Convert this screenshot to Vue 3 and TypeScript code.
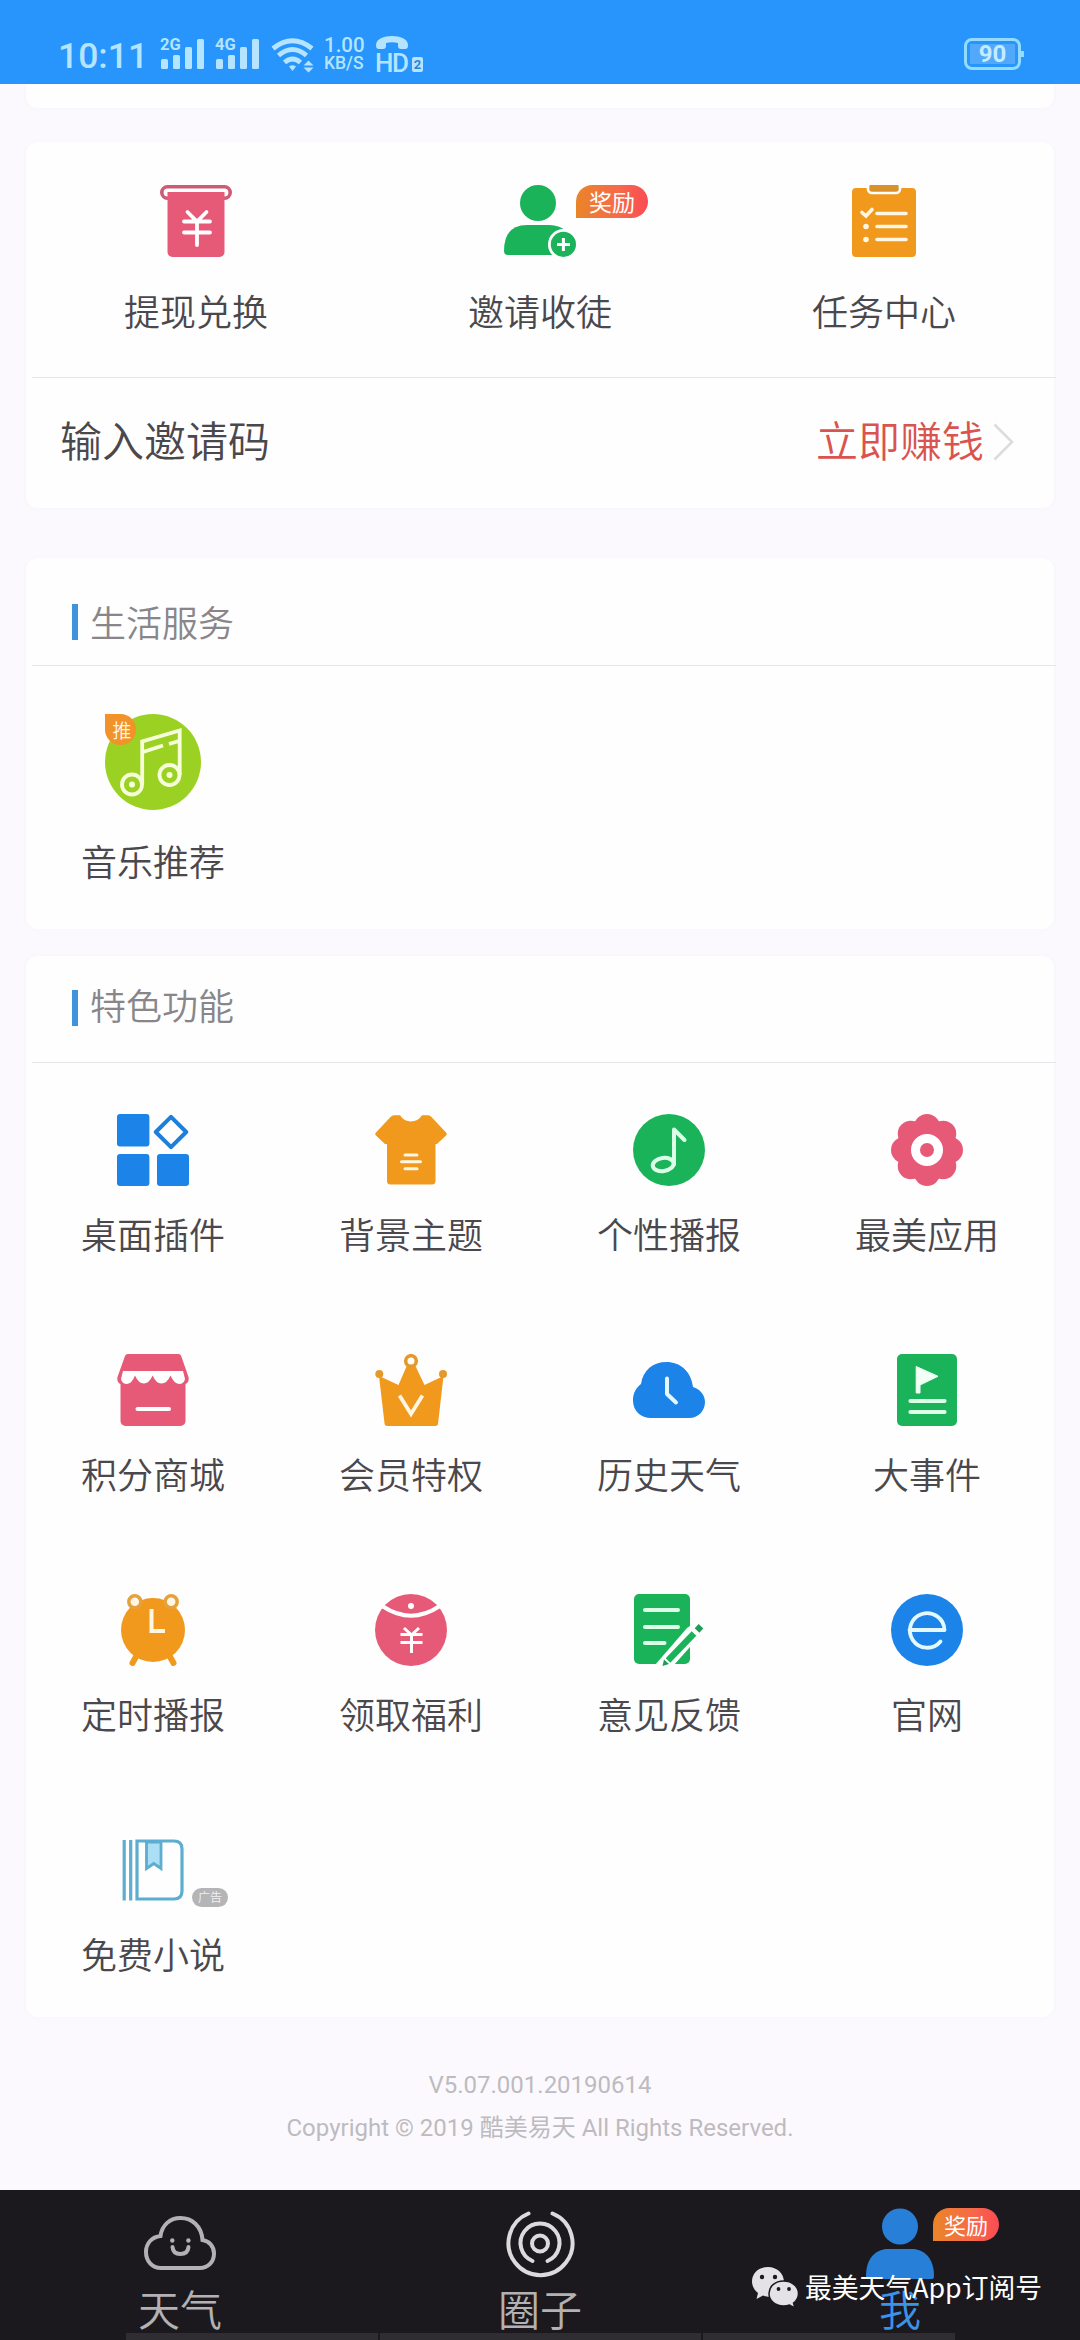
<script setup lang="ts">
interface Feature {
  id: string
  label: string
  tag?: string
}

const rewards: Feature[] = [
  { id: 'withdraw', label: '提现兑换' },
  { id: 'invite', label: '邀请收徒', tag: '奖励' },
  { id: 'task', label: '任务中心' },
]

const features: Feature[] = [
  { id: 'widget', label: '桌面插件' },
  { id: 'theme', label: '背景主题' },
  { id: 'voice', label: '个性播报' },
  { id: 'apps', label: '最美应用' },
  { id: 'shop', label: '积分商城' },
  { id: 'vip', label: '会员特权' },
  { id: 'history', label: '历史天气' },
  { id: 'events', label: '大事件' },
  { id: 'alarm', label: '定时播报' },
  { id: 'bonus', label: '领取福利' },
  { id: 'feedback', label: '意见反馈' },
  { id: 'site', label: '官网' },
  { id: 'novel', label: '免费小说', tag: '广告' },
]

const signals: string[] = ['2G', '4G']
const petals: number[] = [0, 45, 90, 135, 180, 225, 270, 315]
</script>

<template>
  <div class="screen">
    <header class="status">
      <span class="clock">10:11</span>
      <span v-for="s in signals" :key="s" class="signal">
        <svg width="44" height="32" viewBox="0 0 44 32" fill="#b4e4ff">
          <rect x="1" y="21" width="7" height="10" rx="1.5" />
          <rect x="13" y="17" width="7" height="14" rx="1.5" />
          <rect x="25" y="9" width="7" height="22" rx="1.5" />
          <rect x="37" y="1" width="7" height="30" rx="1.5" />
        </svg>
        <em>{{ s }}</em>
      </span>
      <svg class="wifi" width="44" height="36" viewBox="0 0 44 36" fill="none" stroke="#b4e4ff" stroke-width="4.8">
        <path d="M2 11.5Q21.5-4 41 11.5" />
        <path d="M7.500 18.500Q21.500 6.500 35.500 18.500" />
        <path d="M13.500 25.500Q21.500 18.500 29.500 25.500" />
        <path d="M18 29.500Q21.500 27 25 29.500L21.500 34Z" fill="#b4e4ff" stroke="none" />
        <path d="M37.500 23.500L42.500 28.500H32.500ZM37.500 35.500L42.500 30.500H32.500Z" fill="#b4e4ff" stroke="none" />
      </svg>
      <span class="speed"><b>1.00</b><b>KB/S</b></span>
      <span class="volte">
        <svg width="34" height="14" viewBox="0 0 34 14" fill="#b4e4ff">
          <path d="M1 9C1 3 9 0 17 0s16 3 16 9c0 3-1 4-3 4h-4c-2 0-3-1-3-3V7c-4-1-8-1-12 0v3c0 2-1 3-3 3H4c-2 0-3-1-3-4Z" />
        </svg>
        <span class="hd">HD</span>
        <i>2</i>
      </span>
      <span class="battery"><b>90</b></span>
    </header>

    <main class="page">
      <div class="card stub"></div>

      <section class="card first">
        <div class="grid three">
          <div v-for="item in rewards" :key="item.id" class="cell">
            <div class="icon">
              <svg v-if="item.id === 'withdraw'" width="72" height="72" viewBox="0 0 72 72">
                <rect x="1.800" y="1.800" width="68.400" height="11.400" rx="5.700" fill="#fff" stroke="#cf5a74" stroke-width="3.600" />
                <path d="M7.500 7h57v60a5 5 0 0 1-5 5h-47a5 5 0 0 1-5-5Z" fill="#e75a77" />
                <path d="M27.500 27l9.500 9.500 9.500-9.500M24 36.500h26M24 47.500h26M37 36.500V60" fill="none" stroke="#fff" stroke-width="3.800" stroke-linecap="round" />
              </svg>
              <svg v-else-if="item.id === 'invite'" width="72" height="72" viewBox="0 0 72 72">
                <circle cx="34" cy="18" r="18" fill="#1bb35a" />
                <path d="M4 70Q0 70 0 66Q0 40 23 40H45Q68 40 68 66Q68 70 64 70Z" fill="#1bb35a" />
                <circle cx="59.400" cy="59.400" r="14" fill="#1bb35a" stroke="#fff" stroke-width="2.800" />
                <path d="M53 59.400H66M59.400 53V66" stroke="#fff" stroke-width="3" />
              </svg>
              <svg v-else width="72" height="72" viewBox="0 0 72 72">
                <rect x="4" y="3" width="64" height="69" rx="4" fill="#f0991c" />
                <rect x="20" y="-2" width="32" height="10" rx="4" fill="#d9922b" stroke="#fff" stroke-width="2.600" />
                <path d="M14 27.500l4 3.500 6-6.500M29 28.500H58M29 41.500H58M29 54.500H58" fill="none" stroke="#fff7e4" stroke-width="3.600" stroke-linecap="round" />
                <circle cx="18" cy="41.500" r="2.800" fill="#fff7e4" />
                <circle cx="18" cy="54.500" r="2.800" fill="#fff7e4" />
              </svg>
              <span v-if="item.tag" class="reward">{{ item.tag }}</span>
            </div>
            <span class="label">{{ item.label }}</span>
          </div>
        </div>
        <hr />
        <div class="invite-row">
          <span>输入邀请码</span>
          <span class="earn">立即赚钱</span>
          <svg width="22" height="38" viewBox="0 0 22 38" fill="none" stroke="#dcdcde" stroke-width="2.600">
            <path d="M1.500 1.500L19 19 1.500 36.500" />
          </svg>
        </div>
      </section>

      <section class="card second">
        <h2><span>生活服务</span></h2>
        <hr />
        <div class="grid four">
          <div class="cell">
            <div class="music">
              <svg width="96" height="96" viewBox="0 0 96 96" fill="none" stroke="#f6ffd9" stroke-width="3.800">
                <circle cx="48" cy="48" r="48" fill="#9bd123" stroke="none" />
                <circle cx="27" cy="70.500" r="10" />
                <circle cx="64.500" cy="61" r="10" />
                <circle cx="27" cy="70.500" r="3" fill="#f6ffd9" stroke="none" />
                <circle cx="64.500" cy="61" r="3" fill="#f6ffd9" stroke="none" />
                <path d="M37.200 71V27.500L74.700 16.500V61M38 38L58 31.500M64 30L74 27" />
              </svg>
              <span class="pick">推</span>
            </div>
            <span class="label">音乐推荐</span>
          </div>
        </div>
      </section>

      <section class="card third">
        <h2><span>特色功能</span></h2>
        <hr />
        <div class="grid four">
          <div v-for="item in features" :key="item.id" class="cell">
            <div class="icon">
              <svg width="72" height="72" viewBox="0 0 72 72">
                <g v-if="item.id === 'widget'" fill="#1c84e8">
                  <rect width="32.400" height="32.400" rx="3" />
                  <rect y="40" width="32.400" height="32" rx="3" />
                  <rect x="40" y="40" width="32" height="32" rx="3" />
                  <path d="M54 2.800L69.200 18 54 33.200 38.800 18Z" fill="#fff" stroke="#1c7fdc" stroke-width="4" stroke-linejoin="round" />
                </g>
                <g v-else-if="item.id === 'theme'">
                  <path d="M19 1.300H25Q29 7.500 36 7.500T47 1.300H53Q55 1.300 56.500 3L71 18.500Q72.500 20 71 21.500L62 30H60.500V67Q60.500 70.500 57 70.500H15.500Q12 70.500 12 67V30H10L1 21.500Q-.5 20 1 18.500L15.500 3Q17 1.300 19 1.300Z" fill="#f0991c" />
                  <path d="M30 41H42M26.500 47.800H45.500M30 54.700H42" stroke="#fff7e4" stroke-width="3" stroke-linecap="round" />
                </g>
                <g v-else-if="item.id === 'voice'" fill="none" stroke="#dcffe8" stroke-width="4">
                  <circle cx="36" cy="36" r="36" fill="#1bb35a" stroke="none" />
                  <ellipse cx="30.200" cy="50.500" rx="10.500" ry="6.600" transform="rotate(-8 30.200 50.500)" />
                  <path d="M41 50.500V15.500L51.500 26" stroke-linecap="round" stroke-linejoin="round" />
                </g>
                <g v-else-if="item.id === 'apps'" fill="#e75a77">
                  <circle v-for="a in petals" :key="a" cx="36" cy="13" r="13" :transform="`rotate(${a} 36 36)`" />
                  <circle cx="36" cy="36" r="31" />
                  <circle cx="36" cy="36" r="11.500" stroke="#fff" stroke-width="9" />
                </g>
                <g v-else-if="item.id === 'shop'">
                  <path d="M11 0H61.500Q63.500 0 64.200 2L71.500 23Q72.500 28 68.500 30V67a5 5 0 0 1-5 5h-55a5 5 0 0 1-5-5V30Q-.5 28 .5 23L8 2Q8.800 0 11 0Z" fill="#e75a77" />
                  <path d="M6 17H66L68 25Q67 30 62 30Q57 29.500 53.500 21.500Q50 29.500 44.500 29.500T35.700 21.500Q32 29.500 26.800 29.500T18 21.500Q15 29.500 10 30Q5 30 4 25Z" fill="#fff" />
                  <path d="M20.500 55H52" stroke="#fff" stroke-width="4" stroke-linecap="round" />
                </g>
                <g v-else-if="item.id === 'vip'">
                  <path d="M4 22L23.500 31 33 9H39L49.500 31 68.500 22 63 70Q62.800 72 60.500 72H12Q10 72 9.600 70Z" fill="#f0991c" />
                  <circle cx="36" cy="7" r="5.300" fill="#fff" stroke="#e5992b" stroke-width="3.600" />
                  <circle cx="4.300" cy="20" r="4" fill="#e5992b" />
                  <circle cx="68" cy="20" r="4" fill="#e5992b" />
                  <path d="M24.500 41.500L36 60 47.500 41.500" fill="none" stroke="#fff7e4" stroke-width="3.800" />
                </g>
                <g v-else-if="item.id === 'history'">
                  <path d="M18 64C8 64 0 57 0 46.500C0 39 3 34 8 30C10 16 20 8 33.500 8C47 8 58 17 60 33C67 35 72 41 72 48C72 57 65 64 56.500 64Z" fill="#1c84e8" />
                  <path d="M34 24.500V40L43 48.500" fill="none" stroke="#e3f8ff" stroke-width="4" stroke-linecap="round" stroke-linejoin="round" />
                </g>
                <g v-else-if="item.id === 'events'">
                  <rect x="6" width="60" height="72" rx="5" fill="#1bb35a" />
                  <path d="M25.200 12.500L47 22.300 29 31V39H25.200Z" fill="#f2fff6" stroke="#f2fff6" stroke-linejoin="round" />
                  <path d="M19.500 47H53.500M19.500 58H53.500" stroke="#dcffe8" stroke-width="4.200" stroke-linecap="round" />
                </g>
                <g v-else-if="item.id === 'alarm'" stroke="#f0991c">
                  <path d="M20 61L15.500 69M52 61L56.500 69" stroke-width="6" stroke-linecap="round" />
                  <circle cx="36" cy="36" r="32" fill="#f0991c" stroke="none" />
                  <circle cx="17.800" cy="7.800" r="6" fill="#fff7e4" stroke="#e5a23c" stroke-width="3.500" />
                  <circle cx="54.200" cy="7.800" r="6" fill="#fff7e4" stroke="#e5a23c" stroke-width="3.500" />
                  <path d="M34.500 15V37H48" fill="none" stroke="#fff7e4" stroke-width="4" />
                </g>
                <g v-else-if="item.id === 'bonus'" fill="none" stroke="#fff">
                  <circle cx="36" cy="36" r="36" fill="#e75a77" stroke="none" />
                  <path d="M8 12.500Q36 31 64 12.500" stroke-width="4" />
                  <circle cx="36" cy="12" r="3" fill="#fff" stroke="none" />
                  <path d="M29 34L36.500 41 44 34M25.500 40.500H47.500M25.500 48.500H47.500M36.500 40.500V59" stroke-width="3" />
                </g>
                <g v-else-if="item.id === 'feedback'">
                  <rect x="1" width="56" height="70" rx="5" fill="#1bb35a" />
                  <path d="M12 16H45M12 33H45M12 49H31.500" stroke="#dcffe8" stroke-width="4" stroke-linecap="round" />
                  <path d="M22 71L54 34 63 28 72 36 41 71Z" fill="#fff" />
                  <path d="M35 66.500L61 39.500" stroke="#1bb35a" stroke-width="6.400" />
                  <path d="M64 36.500L68 32.300" stroke="#239b58" stroke-width="6.400" stroke-linejoin="round" />
                  <path d="M29.500 72L31 65.500 36 70Z" fill="#239b58" />
                </g>
                <g v-else-if="item.id === 'site'" fill="none" stroke="#e3f8ff" stroke-width="3.800">
                  <circle cx="36" cy="36" r="36" fill="#1c84e8" stroke="none" />
                  <path d="M18.500 36H53.500A17.300 17.300 0 1 0 49.500 47.500" stroke-linejoin="round" stroke-linecap="round" />
                </g>
                <g v-else fill="none" stroke="#5cadd0" stroke-width="3.200">
                  <path d="M7.200 6V66.500M13.700 6V66.500" />
                  <path d="M20 7H57Q65 7 65 15V57Q65 65 57 65H20Z" />
                  <path d="M29.500 8V34.500L36.800 29.500 44 34.500V8Z" fill="#aadff6" stroke-width="2.800" />
                </g>
              </svg>
              <span v-if="item.tag" class="ad">{{ item.tag }}</span>
            </div>
            <span class="label">{{ item.label }}</span>
          </div>
        </div>
      </section>

      <footer class="about">
        <p>V5.07.001.20190614</p>
        <p>Copyright © 2019 酷美易天 All Rights Reserved.</p>
      </footer>
    </main>

    <nav class="tabs">
      <div class="tab">
        <svg width="72" height="72" viewBox="0 0 72 72" fill="none" stroke="#b3b1b4" stroke-width="4">
          <path d="M17 60C8 60 2 53 2 44C2 35 8 29 16.500 28C18 17 26 10 36.500 10C48 10 57.500 18 58.500 32C65 33 70 38 70 45.500C70 54 64 60 56 60Z" />
          <path d="M28.500 39C29 44 32 46 36.300 46S44 44 44.500 39" stroke-linecap="round" />
          <circle cx="28.300" cy="32.500" r="2.200" fill="#b3b1b4" stroke="none" />
          <circle cx="44.400" cy="32.500" r="2.200" fill="#b3b1b4" stroke="none" />
        </svg>
        <span>天气</span>
      </div>
      <div class="tab">
        <svg width="72" height="72" viewBox="0 0 72 72" fill="none" stroke="#dcdadd" stroke-width="4" stroke-linecap="round">
          <circle cx="36" cy="35.500" r="8" />
          <path d="M28.500 53A19.500 19.500 0 1 1 43.500 53" />
          <path d="M24.500 5.500A32 32 0 1 0 48.500 5.500" />
        </svg>
        <span>圈子</span>
      </div>
      <div class="tab active">
        <svg width="72" height="72" viewBox="0 0 72 72" fill="#277fd8">
          <circle cx="36" cy="18.500" r="18" />
          <path d="M4 71Q2 71 2 68C2 50 12 41 24 41H48C60 41 70 50 70 68Q70 71 68 71Z" />
        </svg>
        <span>我</span>
        <span class="reward">奖励</span>
      </div>
      <div class="watermark">
        <svg width="48" height="42" viewBox="0 0 48 42">
          <path d="M17 1C7 1 1 7.500 1 15.500C1 20 3.500 24.500 7 27L5.500 33 12 29.500Q15 31 19 30.500C27 30 33 24 33 16C33 7.500 26 1 17 1Z" fill="#e4e2e5" />
          <path d="M32.500 15C24 15 18 20.500 18 27.500S24 40 32.500 40Q36 40 38.500 39L44 42 42.500 37C46 34.500 47.500 31 47.500 27.500C47.500 20.500 41 15 32.500 15Z" fill="#e4e2e5" stroke="#1b191d" stroke-width="1.500" />
          <g fill="#1b191d">
            <circle cx="11" cy="11" r="2.200" /><circle cx="24" cy="11" r="2.200" />
            <circle cx="27.500" cy="23" r="1.900" /><circle cx="38" cy="23" r="1.900" />
          </g>
        </svg>
        <span>最美天气App订阅号</span>
      </div>
      <div class="dock"><i></i><i></i><i></i></div>
    </nav>
  </div>
</template>

<style>
body {
  background: #fbf9fd;
}
</style>

<style scoped>
.screen {
  display: flex;
  flex-direction: column;
  width: 1080px;
  height: 2340px;
  overflow: hidden;
  background: #fbf9fd;
  font-family: "Noto Sans CJK SC", sans-serif;
  font-weight: 350;
  color: #4a484c;
}

/* status bar */
.status {
  display: flex;
  align-items: flex-start;
  box-sizing: border-box;
  flex: none;
  height: 84px;
  padding: 36px 56px 0 58px;
  background: #2795fc;
  color: #b4e4ff;
  font-family: Roboto, sans-serif;
}
.clock {
  width: 102px;
  font-size: 35.500px;
  line-height: 40px;
  font-weight: 500;
}
.signal {
  position: relative;
  width: 55px;
  padding-top: 2px;
}
.signal em {
  position: absolute;
  left: 0;
  top: 1px;
  font-size: 16.500px;
  line-height: 16px;
  font-style: normal;
  font-weight: 700;
}
.wifi {
  margin: 1px 9px 0 1px;
}
.speed {
  display: flex;
  flex-direction: column;
  width: 51px;
  font-size: 20.500px;
  line-height: 18px;
}
.speed b {
  font-weight: 500;
}
.speed b + b {
  font-size: 17.500px;
}
.volte {
  display: grid;
  grid-template-columns: 37px 12px;
}
.volte svg {
  grid-column: 1 / 3;
}
.hd {
  font-size: 26px;
  line-height: 26px;
  font-weight: 500;
  letter-spacing: -1.500px;
}
.volte i {
  width: 11px;
  height: 15px;
  margin-top: 7px;
  border-radius: 2px;
  background: #b4e4ff;
  color: #2f82d4;
  font-size: 13px;
  line-height: 15px;
  font-style: normal;
  font-weight: 700;
  text-align: center;
}
.battery {
  position: relative;
  box-sizing: border-box;
  width: 57px;
  height: 32px;
  margin: 2px 3px 0 auto;
  padding: 3px;
  border: 3px solid #93dcff;
  border-radius: 8px;
}
.battery::after {
  content: "";
  position: absolute;
  right: -6px;
  top: 10px;
  width: 3px;
  height: 6px;
  background: #93dcff;
}
.battery b {
  display: block;
  background: #52a8fa;
  color: #c3edff;
  font-size: 24px;
  line-height: 20px;
  font-weight: 700;
  text-align: center;
}

/* cards */
.page {
  flex: none;
  height: 2106px;
}
.card {
  box-sizing: border-box;
  margin: 0 26px;
  border-radius: 12px;
  background: #fefefe;
  box-shadow: 0 0 6px rgba(60, 50, 80, 0.025);
}
.stub {
  height: 24px;
  border-radius: 0 0 12px 12px;
}
.first {
  height: 366px;
  margin-top: 34px;
  padding-top: 43px;
}
.second {
  height: 371px;
  margin-top: 50px;
  padding-top: 46px;
}
.third {
  height: 1061px;
  margin-top: 27px;
  padding-top: 34px;
}
hr {
  height: 1px;
  margin: 0 -2px 0 6px;
  border: 0;
  background: #e7e5ea;
}
.grid {
  display: grid;
  margin: 0 -2px;
}
.three {
  grid-template-columns: repeat(3, 1fr);
  padding-bottom: 40px;
}
.four {
  grid-template-columns: repeat(4, 1fr);
}
.cell {
  display: flex;
  flex-direction: column;
  align-items: center;
}
.icon {
  position: relative;
  width: 72px;
  height: 72px;
}
.icon svg,
.music svg {
  display: block;
}
.label {
  margin-top: 26px;
  font-size: 36px;
  line-height: 54px;
}
.reward {
  position: absolute;
  left: 72px;
  top: 0;
  width: 72px;
  height: 33px;
  border-radius: 17px 17px 17px 0;
  background: linear-gradient(90deg, #e98528, #f7694a 60%, #fa4b54);
  color: #fff;
  font-size: 23px;
  line-height: 32px;
  font-weight: 400;
  text-align: center;
}
.invite-row {
  display: flex;
  align-items: center;
  height: 121px;
  padding: 0 39px 0 34px;
  font-size: 42px;
}
.invite-row svg {
  margin: 7px 0 0 9px;
}
.earn {
  margin-left: auto;
  color: #d9544f;
}
h2 {
  display: flex;
  align-items: center;
  height: 36px;
  margin: 0 0 25px;
  padding-left: 46px;
  color: #88868a;
  font-size: 36px;
  font-weight: 350;
}
h2::before {
  content: "";
  width: 6px;
  height: 36px;
  margin-right: 12px;
  background: #3f93dc;
}
h2 span {
  margin-top: -3px;
}
.third h2 {
  margin-bottom: 36px;
}
.third h2 span {
  margin-top: -8px;
}
.second .grid {
  padding-top: 48px;
}
.second .label {
  margin-top: 23px;
}
.third .grid {
  grid-auto-rows: 240px;
  padding-top: 51px;
}
.third .label {
  margin-top: 20px;
}
.music {
  position: relative;
  width: 96px;
  height: 96px;
}
.pick {
  position: absolute;
  left: 0;
  top: 0;
  width: 31px;
  height: 31px;
  border-radius: 0 16px 16px 16px;
  background: #f2922a;
  color: #fff7e4;
  font-size: 19px;
  line-height: 31px;
  text-align: center;
  text-indent: 3px;
}
.ad {
  position: absolute;
  left: 75px;
  top: 54px;
  width: 36px;
  height: 19px;
  border-radius: 10px;
  background: #b5b4b7;
  color: #f2f2f3;
  font-size: 12px;
  line-height: 18px;
  text-align: center;
}
.about {
  padding-top: 47px;
  color: #bdbbc0;
  font-family: Roboto, "Noto Sans CJK SC", sans-serif;
  font-size: 24px;
  line-height: 43px;
  font-weight: 400;
  text-align: center;
}
.about p {
  margin: 0;
}

/* bottom tabs */
.tabs {
  position: relative;
  display: flex;
  flex: none;
  height: 150px;
  background: #1b191d;
}
.tab {
  position: relative;
  display: flex;
  flex-direction: column;
  align-items: center;
  width: 360px;
  padding-top: 18px;
  color: #b3b1b4;
  font-size: 42px;
  line-height: 56px;
}
.tab svg {
  flex: none;
}
.tab.active {
  color: #3b93e8;
}
.tab .reward {
  left: 213px;
  top: 18px;
  width: 66px;
  font-size: 22px;
  line-height: 32px;
}
.watermark {
  position: absolute;
  left: 751px;
  top: 76px;
  display: flex;
  align-items: center;
  gap: 6px;
  color: #fff;
  font-size: 26.800px;
  line-height: 42px;
  font-weight: 400;
  white-space: nowrap;
}
.dock {
  position: absolute;
  left: 126px;
  bottom: 0;
  display: flex;
  gap: 2px;
  width: 829px;
  height: 7px;
}
.dock i {
  flex: 1 0 0;
  background: #2f2d31;
}
.dock i:nth-child(2) {
  flex-grow: 1.280;
}
</style>
